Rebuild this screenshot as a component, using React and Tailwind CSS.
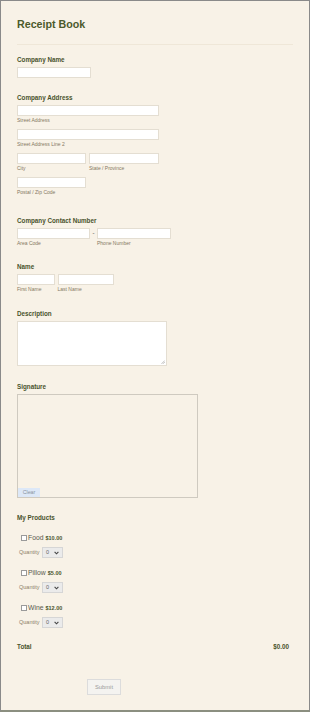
import React from 'react';

const Label = ({ children, mt }) => (
  <div className={`${mt} text-[6.3px] leading-[8px] font-bold text-[#49522c]`}>{children}</div>
);

const Sub = ({ children, className = '' }) => (
  <div className={`mt-[1px] text-[5px] leading-[6px] text-[#857962] ${className}`}>{children}</div>
);

const Field = ({ w }) => (
  <div className={`${w} h-[11px] bg-white border border-[#e4ded2]`} />
);

const Product = ({ name, price, mt }) => (
  <div>
    <div className={`${mt} ml-[4px] flex items-center h-[8px]`}>
      <div className="w-[6px] h-[6px] bg-white border border-[#9a9a9a]" />
      <span className="ml-[1px] text-[6.8px] leading-[8px] text-[#5a5a4e]">{name}</span>
      <span className="ml-[2px] text-[5.5px] leading-[8px] font-bold text-[#49522c]">{price}</span>
    </div>
    <div className="mt-[5px] ml-[2px] flex items-center h-[11px]">
      <span className="text-[5.5px] text-[#8c8068] w-[23px]">Quantity</span>
      <div className="w-[21px] h-[11px] bg-[#ebebeb] border border-[#d6d6d6] flex items-center justify-between px-[3px]">
        <span className="text-[5.5px] text-[#666]">0</span>
        <svg width="5" height="4" viewBox="0 0 5 4"><path d="M0.6 0.8 L2.5 2.8 L4.4 0.8" fill="none" stroke="#444" strokeWidth="1.1" /></svg>
      </div>
    </div>
  </div>
);

const App = () => {
  return (
    <div className="w-[310px] h-[712px] bg-[#f8f2e7] border border-[#8a8a8a] border-b-2 border-b-[#8b8f80] font-['Liberation_Sans',Arial,sans-serif] overflow-hidden">
      <div className="pl-[16px] pr-[20px]">
        <div className="mt-[17px] text-[10.7px] leading-[13px] font-bold text-[#4b5a2b]">Receipt Book</div>
        <div className="mt-[13px] w-[276px] h-px bg-[#efe7d8]" />

        <Label mt="mt-[11px]">Company Name</Label>
        <div className="mt-[3px]"><Field w="w-[74px]" /></div>

        <Label mt="mt-[16px]">Company Address</Label>
        <div className="mt-[3px]"><Field w="w-[142px]" /></div>
        <Sub>Street Address</Sub>
        <div className="mt-[6px]"><Field w="w-[142px]" /></div>
        <Sub>Street Address Line 2</Sub>
        <div className="mt-[6px] flex gap-[3px]">
          <div>
            <Field w="w-[69px]" />
            <Sub>City</Sub>
          </div>
          <div>
            <Field w="w-[70px]" />
            <Sub>State / Province</Sub>
          </div>
        </div>
        <div className="mt-[6px]"><Field w="w-[69px]" /></div>
        <Sub>Postal / Zip Code</Sub>

        <Label mt="mt-[22px]">Company Contact Number</Label>
        <div className="mt-[3px] flex">
          <div>
            <Field w="w-[73px]" />
            <Sub>Area Code</Sub>
          </div>
          <div className="w-[7px] h-[11px] flex items-center justify-center text-[6px] text-[#333]">-</div>
          <div>
            <Field w="w-[74px]" />
            <Sub>Phone Number</Sub>
          </div>
        </div>

        <Label mt="mt-[17px]">Name</Label>
        <div className="mt-[3px] flex gap-[2.5px]">
          <div>
            <Field w="w-[38px]" />
            <Sub>First Name</Sub>
          </div>
          <div>
            <Field w="w-[56px]" />
            <Sub>Last Name</Sub>
          </div>
        </div>

        <Label mt="mt-[18px]">Description</Label>
        <div className="mt-[3px] w-[150px] h-[45px] bg-white border border-[#e4ded2] flex items-end justify-end p-[1px]">
          <svg width="4" height="4" viewBox="0 0 4 4"><path d="M0.5 3.8 L3.8 0.5 M2 3.8 L3.8 2" stroke="#999" strokeWidth="0.6" /></svg>
        </div>

        <Label mt="mt-[17px]">Signature</Label>
        <div className="mt-[3px] w-[181px] h-[104px] border border-[#cfcac0] flex flex-col justify-end">
          <div className="w-[22px] h-[9px] bg-[#dde8f7] flex items-center justify-center text-[5.3px] text-[#8a93a0]">Clear</div>
        </div>

        <Label mt="mt-[16px]">My Products</Label>
        <Product name="Food" price="$10.00" mt="mt-[12px]" />
        <Product name="Pillow" price="$5.00" mt="mt-[11px]" />
        <Product name="Wine" price="$12.00" mt="mt-[11px]" />

        <div className="mt-[15px] flex justify-between items-center h-[8px]">
          <span className="text-[6.3px] font-bold text-[#49522c]">Total</span>
          <span className="text-[6.3px] font-bold text-[#49522c] -mt-[1px]">$0.00</span>
        </div>

        <div className="mt-[28px] ml-[70px] w-[34px] h-[16px] bg-[#f4f3f0] border border-[#dcdcdc] flex items-center justify-center text-[5.8px] text-[#9a9a9a]">Submit</div>
      </div>
    </div>
  );
};

export default App;
